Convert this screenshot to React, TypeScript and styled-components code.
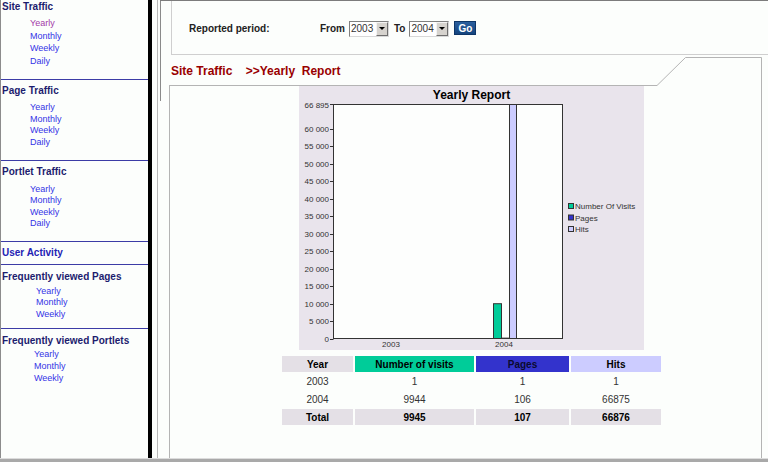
import React from 'react';
import styled, { createGlobalStyle } from 'styled-components';

const Global = createGlobalStyle`
  html, body { margin: 0; padding: 0; background: #fcfefc; }
  body {
    font-family: "Liberation Sans", Arial, Helvetica, sans-serif;
    width: 768px; height: 462px; overflow: hidden;
  }
  * { box-sizing: border-box; }
`;

const Page = styled.div`
  width: 768px; height: 462px;
  display: flex; flex-direction: column;
  background: #fcfefc;
`;

const Frames = styled.div`
  display: flex; height: 458px;
`;

const Sidebar = styled.nav`
  width: 152px; flex: none;
  border-left: 1px solid #8c8c8c;
  border-right: 4px solid #000;
  display: flex; flex-direction: column;
`;

const Section = styled.div<{ $pt: number; $pb: number; $last?: boolean }>`
  padding: ${p => p.$pt}px 0 ${p => p.$pb}px 1px;
  border-bottom: ${p => (p.$last ? 'none' : '1px solid #3c3ca6')};
`;

const Heading = styled.div<{ $link?: boolean }>`
  font-size: 10px; line-height: 12px; font-weight: bold;
  color: ${p => (p.$link ? '#2323b4' : '#1c1c6e')};
  white-space: nowrap;
`;

const LinkList = styled.ul<{ $indent: number; $lh: number; $mt: number }>`
  list-style: none; margin: ${p => p.$mt}px 0 0 0;
  padding: 0 0 0 ${p => p.$indent}px;
  font-size: 9px; line-height: ${p => p.$lh}px;
`;

const NavLink = styled.li<{ $visited?: boolean }>`
  color: ${p => (p.$visited ? '#a33aa8' : '#3434e6')};
`;

const Gutter = styled.div`
  width: 8px; flex: none;
  display: flex;
  &::before {
    content: ''; width: 5px; border-right: 1px solid #b8b8b8;
  }
`;

const Main = styled.main`
  flex: 1;
  border-top: 1px solid #7c7c7c;
  display: flex; flex-direction: column;
  position: relative;
`;

const FrameEdge = styled.div`
  position: absolute; left: 0; top: 0; width: 1px; height: 100px;
  background: #8a8a8a;
`;

const TopPanel = styled.div`
  margin-left: 11px; height: 54px;
  border-left: 1px solid #cfcfcf;
  border-bottom: 1px solid #cfcfcf;
  display: flex; align-items: center;
  padding: 2px 0 0 17px;
  font-size: 10px; font-weight: bold; color: #222;
`;

const PeriodLabel = styled.span`
  width: 131px; flex: none;
`;

const FormText = styled.span`
  margin-right: 4px;
`;

const SelectBox = styled.div`
  width: 40px; height: 16px;
  display: flex; align-items: center; justify-content: space-between;
  border: 1px solid #808080; border-right-color: #d8d8d8; border-bottom-color: #d8d8d8;
  background: #fff;
  padding: 0 0 0 1px; margin-right: 5px;
  font-size: 10px; font-weight: normal; color: #333;
`;

const SelectArrow = styled.span`
  width: 12px; height: 14px;
  background: #d6d3ce;
  border: 1px solid; border-color: #f4f4f4 #6e6e6e #6e6e6e #f4f4f4;
  display: flex; align-items: center; justify-content: center;
  &::after {
    content: ''; border-left: 3px solid transparent; border-right: 3px solid transparent;
    border-top: 3px solid #000;
  }
`;

const GoButton = styled.button`
  width: 22px; height: 14px; padding: 0; margin-top: -1px;
  border: 1px solid #0e3668;
  background: linear-gradient(#2a5f9e, #15457f);
  color: #fff; font: bold 10px "Liberation Sans", Arial, sans-serif;
`;

const HeaderRow = styled.div`
  margin: 2px 0 0 9px; width: 593px; height: 29px;
  display: flex; flex: none;
`;

const Breadcrumb = styled.div`
  flex: 1; border-bottom: 1px solid #b4b4b4;
  display: flex; align-items: center; padding: 0 0 0 2px;
  font-size: 12px; font-weight: bold; color: #990000;
  white-space: pre;
`;

const Notch = styled.svg`
  width: 105px; height: 29px; flex: none; display: block;
`;

const ContentBox = styled.section`
  margin-left: 9px; width: 593px; flex: 1;
  border-left: 1px solid #b4b4b4; border-right: 1px solid #b4b4b4;
  padding-top: 0;
`;

const ChartFrame = styled.div`
  margin-left: 129px; width: 345px; height: 264px;
  background: #e9e4ec;
`;

const DataTable = styled.table`
  margin: 5px 0 0 110px;
  border-spacing: 2px 1px;
  font-size: 10px; color: #333;
`;

const Cell = styled.td<{ $bg?: string; $bold?: boolean; $w?: number; $h: number; $fg?: string }>`
  padding: 0; text-align: center;
  width: ${p => (p.$w ? `${p.$w}px` : 'auto')};
  height: ${p => p.$h}px;
  background: ${p => p.$bg || 'transparent'};
  font-weight: ${p => (p.$bold ? 'bold' : 'normal')};
  color: ${p => p.$fg || (p.$bold ? '#000' : '#333')};
`;

const StatusBar = styled.div`
  height: 4px; border-top: 1px solid #dcdcdc; background: #a9a9a9;
`;

const GRAY = '#e4e0e6';

type Sec = {
  title: string; link?: boolean; links: string[]; pt: number; pb: number;
  mt: number; lh: number; indent: number; last?: boolean;
};

const sections: Sec[] = [
  { title: 'Site Traffic', links: ['Yearly', 'Monthly', 'Weekly', 'Daily'], pt: 1, pb: 11, mt: 4, lh: 12.7, indent: 28 },
  { title: 'Page Traffic', links: ['Yearly', 'Monthly', 'Weekly', 'Daily'], pt: 5, pb: 11, mt: 5, lh: 11.7, indent: 28 },
  { title: 'Portlet Traffic', links: ['Yearly', 'Monthly', 'Weekly', 'Daily'], pt: 5, pb: 11, mt: 6, lh: 11.5, indent: 28 },
  { title: 'User Activity', link: true, links: [], pt: 5, pb: 5, mt: 0, lh: 12, indent: 0 },
  { title: 'Frequently viewed Pages', links: ['Yearly', 'Monthly', 'Weekly'], pt: 6, pb: 8, mt: 3, lh: 11.5, indent: 34 },
  { title: 'Frequently viewed Portlets', links: ['Yearly', 'Monthly', 'Weekly'], pt: 6, pb: 0, mt: 2, lh: 11.8, indent: 32, last: true },
];

const MAX = 66895;
const PLOT_TOP = 18.5;
const PLOT_BOTTOM = 252.5;
const PLOT_H = PLOT_BOTTOM - PLOT_TOP;
const yOf = (v: number) => PLOT_BOTTOM - (v / MAX) * PLOT_H;

const Chart: React.FC = () => {
  const ticks = [0, 5000, 10000, 15000, 20000, 25000, 30000, 35000, 40000, 45000, 50000, 55000, 60000];
  const fmt = (v: number) => v.toLocaleString('en-US').replace(',', ' ');
  return (
    <svg width={345} height={264} viewBox="0 0 345 264" style={{ display: 'block' }}
      fontFamily='"Liberation Sans", Arial, sans-serif'>
      <text x={172.5} y={12.5} textAnchor="middle" fontSize={12} fontWeight="bold" fill="#000">Yearly Report</text>
      <rect x={34.5} y={PLOT_TOP} width={229} height={PLOT_H} fill="#fdfefd" stroke="#333" strokeWidth={1} />
      {ticks.map(t => (
        <g key={t}>
          <line x1={31} x2={34.5} y1={Math.round(yOf(t)) + 0.5} y2={Math.round(yOf(t)) + 0.5} stroke="#333" />
          <text x={30} y={Math.round(yOf(t)) + 3} textAnchor="end" fontSize={8} fill="#333">{fmt(t)}</text>
        </g>
      ))}
      <line x1={31} x2={34.5} y1={PLOT_TOP} y2={PLOT_TOP} stroke="#333" />
      <text x={30} y={PLOT_TOP + 3} textAnchor="end" fontSize={8} fill="#333">66 895</text>
      <text x={92} y={261} textAnchor="middle" fontSize={8} fill="#333">2003</text>
      <text x={205} y={261} textAnchor="middle" fontSize={8} fill="#333">2004</text>
      <rect x={194.5} y={yOf(9944)} width={8} height={PLOT_BOTTOM - yOf(9944)} fill="#00cc99" stroke="#333" />
      <rect x={202.5} y={yOf(106)} width={8} height={PLOT_BOTTOM - yOf(106)} fill="#3333cc" stroke="#333" />
      <rect x={210.5} y={PLOT_TOP} width={7} height={PLOT_H} fill="#ccccff" stroke="#333" />
      {[
        ['Number Of Visits', '#00cc99'],
        ['Pages', '#3333cc'],
        ['Hits', '#ccccff'],
      ].map(([label, c], i) => (
        <g key={label}>
          <rect x={269.5} y={117.5 + i * 11.5} width={5} height={5} fill={c} stroke="#333" />
          <text x={276} y={123 + i * 11.5} fontSize={8} fill="#333">{label}</text>
        </g>
      ))}
    </svg>
  );
};

const Select: React.FC<{ value: string }> = ({ value }) => (
  <SelectBox>
    <span>{value}</span>
    <SelectArrow />
  </SelectBox>
);

export default function App() {
  return (
    <Page>
      <Global />
      <Frames>
        <Sidebar>
          {sections.map(s => (
            <Section key={s.title} $pt={s.pt} $pb={s.pb} $last={s.last}>
              <Heading $link={s.link}>{s.title}</Heading>
              {s.links.length > 0 && (
                <LinkList $indent={s.indent} $lh={s.lh} $mt={s.mt}>
                  {s.links.map((l, i) => (
                    <NavLink key={l} $visited={s.title === 'Site Traffic' && i === 0}>{l}</NavLink>
                  ))}
                </LinkList>
              )}
            </Section>
          ))}
        </Sidebar>
        <Gutter />
        <Main>
          <FrameEdge />
          <TopPanel>
            <PeriodLabel>Reported period:</PeriodLabel>
            <FormText>From</FormText>
            <Select value="2003" />
            <FormText>To</FormText>
            <Select value="2004" />
            <GoButton>Go</GoButton>
          </TopPanel>
          <HeaderRow>
            <Breadcrumb>{'Site Traffic    >>Yearly  Report'}</Breadcrumb>
            <Notch viewBox="0 0 105 29">
              <path d="M0 28.5 L28.5 0.5 L104.5 0.5 L104.5 29" fill="none" stroke="#b4b4b4" />
            </Notch>
          </HeaderRow>
          <ContentBox>
            <ChartFrame>
              <Chart />
            </ChartFrame>
            <DataTable>
              <tbody>
                <tr>
                  <Cell $w={71} $h={16} $bg={GRAY} $bold>Year</Cell>
                  <Cell $w={119} $h={16} $bg="#00cc99" $bold>Number of visits</Cell>
                  <Cell $w={93} $h={16} $bg="#3333cc" $bold $fg="#0a0a30">Pages</Cell>
                  <Cell $w={90} $h={16} $bg="#ccccff" $bold>Hits</Cell>
                </tr>
                <tr>
                  <Cell $h={17}>2003</Cell><Cell $h={17}>1</Cell><Cell $h={17}>1</Cell><Cell $h={17}>1</Cell>
                </tr>
                <tr>
                  <Cell $h={17}>2004</Cell><Cell $h={17}>9944</Cell><Cell $h={17}>106</Cell><Cell $h={17}>66875</Cell>
                </tr>
                <tr>
                  <Cell $h={16} $bg={GRAY} $bold>Total</Cell>
                  <Cell $h={16} $bg={GRAY} $bold>9945</Cell>
                  <Cell $h={16} $bg={GRAY} $bold>107</Cell>
                  <Cell $h={16} $bg={GRAY} $bold>66876</Cell>
                </tr>
              </tbody>
            </DataTable>
          </ContentBox>
        </Main>
      </Frames>
      <StatusBar />
    </Page>
  );
}
